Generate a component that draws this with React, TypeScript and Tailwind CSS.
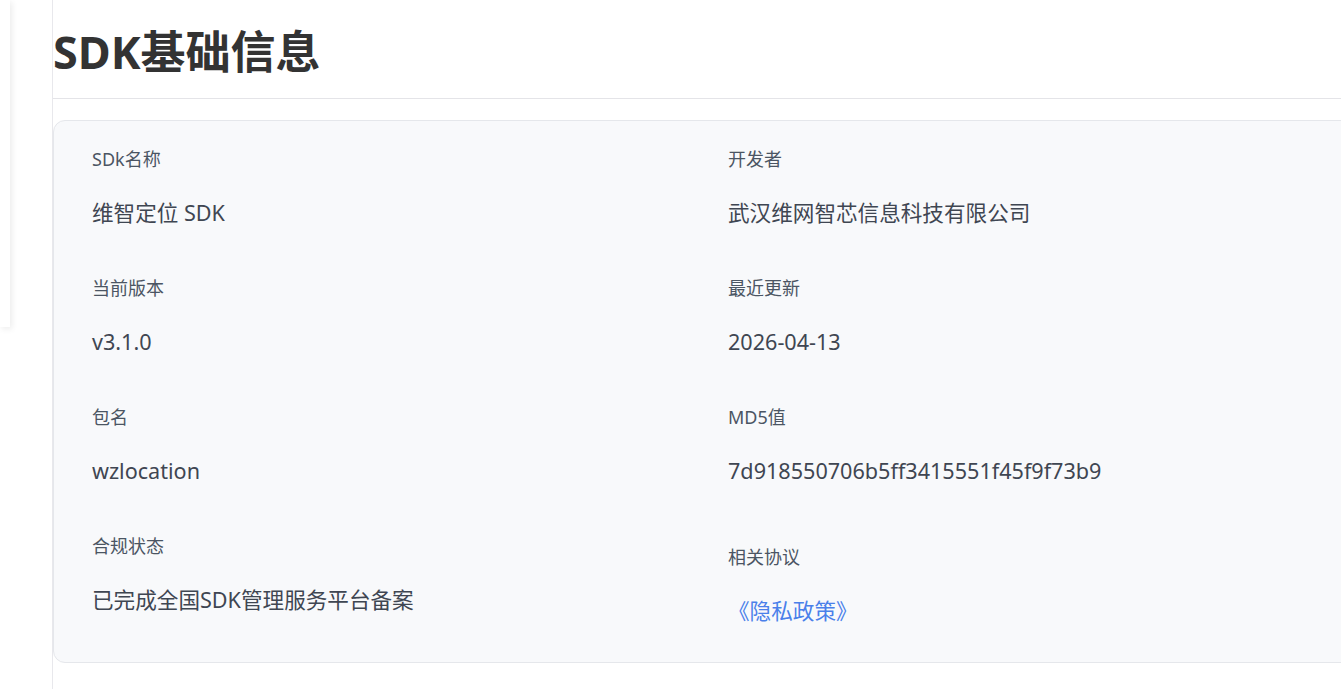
const rows = [
  { label: "SDk名称", value: "维智定位 SDK" },
  { label: "开发者", value: "武汉维网智芯信息科技有限公司" },
  { label: "当前版本", value: "v3.1.0" },
  { label: "最近更新", value: "2026-04-13" },
  { label: "包名", value: "wzlocation" },
  { label: "MD5值", value: "7d918550706b5ff3415551f45f9f73b9" },
  { label: "合规状态", value: "已完成全国SDK管理服务平台备案" },
];

const InfoItem = ({ label, children, className = "" }: { label: string; children: React.ReactNode; className?: string }) => (
  <div className={`pb-[23px] ${className}`}>
    <div className="text-[18px] leading-[27px] text-[#4b5563]">{label}</div>
    <div className="mt-6 text-[21.6px] leading-[32px] text-[#3f4652]">{children}</div>
  </div>
);

export default function App() {
  return (
    <div
      className="flex min-h-screen w-full overflow-hidden bg-white"
      style={{ fontFamily: '"Noto Sans", "Noto Sans CJK SC", sans-serif' }}
    >
      {/* collapsed side drawer */}
      <div className="w-[52px] shrink-0">
        <div className="h-[327px] w-[10px] bg-white shadow-[2px_2px_6px_rgba(0,0,0,0.08)]" />
      </div>

      <main className="min-w-[1320px] flex-1 border-l border-[#e8e8ec]">
        <div className="border-b border-[#e4e4e8] pb-[18px] pt-[24px]">
          <h1 className="text-[45px] font-bold leading-[56px] text-[#333333]">SDK基础信息</h1>
        </div>

        <section className="mt-[21px] w-[1318px] rounded-[12px] border border-[#e5e7eb] bg-[#f8f9fb] px-[38px] pb-[12px] pt-[25px]">
          <div className="grid grid-cols-2 gap-x-8 gap-y-[23px]">
            {rows.map((r) => (
              <InfoItem key={r.label} label={r.label}>
                {r.value}
              </InfoItem>
            ))}
            <InfoItem label="相关协议" className="mt-[11px]">
              <a href="#" className="text-[#4a80ea]">
                《隐私政策》
              </a>
            </InfoItem>
          </div>
        </section>
      </main>
    </div>
  );
}
